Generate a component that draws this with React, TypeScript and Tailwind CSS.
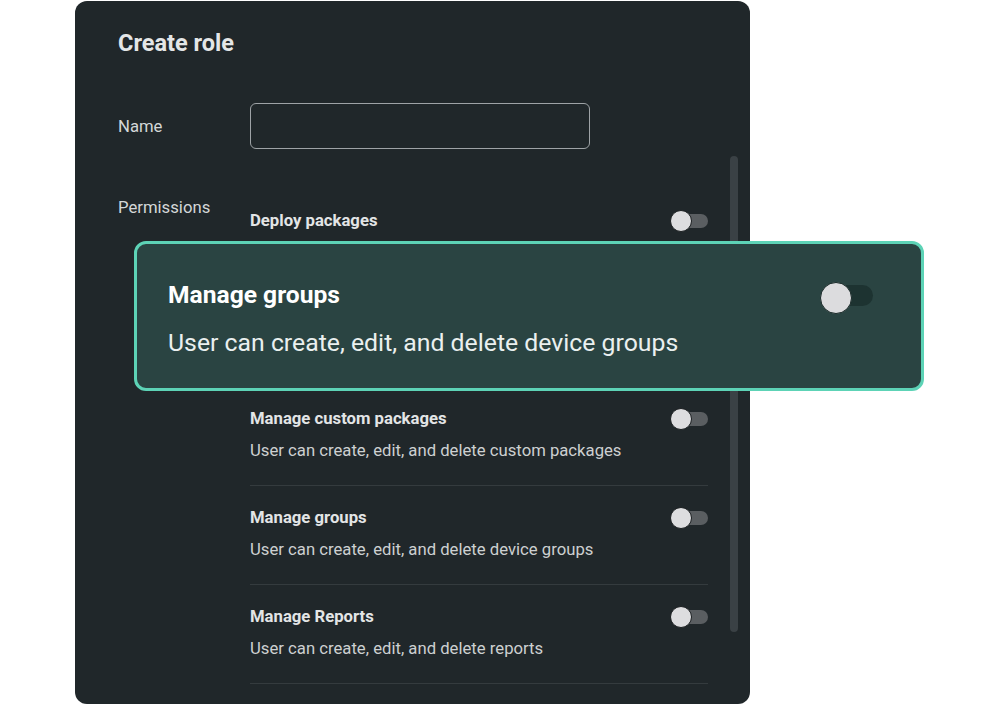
import React from "react";

const permissions = [
  { title: "Deploy packages", desc: "User can deploy packages to devices" },
  { title: "Manage devices", desc: "User can create, edit, and delete devices" },
  { title: "Manage custom packages", desc: "User can create, edit, and delete custom packages" },
  { title: "Manage groups", desc: "User can create, edit, and delete device groups" },
  { title: "Manage Reports", desc: "User can create, edit, and delete reports" },
];

function Toggle({ large }: { large?: boolean }) {
  if (large) {
    return (
      <div className="relative flex h-[30px] w-[53px] shrink-0 items-center">
        <div className="ml-auto h-[21px] w-[44px] rounded-full bg-[#1d3331]" />
        <div className="absolute left-0 top-[2px] h-[32px] w-[32px] rounded-full border border-[#1a2a29] bg-[#dcdcde]" />
      </div>
    );
  }
  return (
    <div className="relative flex h-[20px] w-[38px] shrink-0 items-center">
      <div className="ml-auto h-[14px] w-[30px] rounded-full bg-[#5a5e61]" />
      <div className="absolute -top-px left-0 h-[22px] w-[22px] rounded-full border border-[#1b1f21] bg-[#dddddf]" />
    </div>
  );
}

export default function App() {
  return (
    <div
      className="relative h-[705px] w-[1000px] overflow-hidden bg-white"
      style={{ fontFamily: "Roboto, 'Liberation Sans', sans-serif" }}
    >
      <div className="ml-[75px] mt-px h-[703px] w-[675px] rounded-xl bg-[#20272a] pl-[43px] pt-[28px]">
        <h1 className="text-[23.5px] font-bold leading-[28px] text-[#e4e6e7]">Create role</h1>

        <div className="mt-[46px] flex items-center">
          <div className="w-[132px] pt-px text-[16.7px] leading-[20px] text-[#d4d7d8]">Name</div>
          <div className="h-[46px] w-[340px] rounded-md border border-[#9ea3a6]" />
        </div>

        <div className="mt-[7px] flex">
          <div className="w-[132px] pt-[42px] text-[16.7px] leading-[20px] text-[#d4d7d8]">Permissions</div>
          <div className="w-[458px] pt-[33px]">
            {permissions.map((p) => (
              <div key={p.title} className="border-b border-[#343b3e] pb-[22px] pt-[22px]">
                <div className="flex h-[20px] items-center justify-between">
                  <span className="text-[16.7px] font-bold leading-[20px] text-[#e3e5e6]">{p.title}</span>
                  <Toggle />
                </div>
                <div className="mt-[10px] text-[16.7px] leading-[24px] text-[#cdd0d1]">{p.desc}</div>
              </div>
            ))}
          </div>
          <div className="ml-[22px] h-[476px] w-[8px] rounded-full bg-[#3a4145]" />
        </div>
      </div>

      <div className="absolute left-[134px] top-[241px] h-[150px] w-[790px] rounded-xl border-[3px] border-[#5dd3b6] bg-[#2a4442] pl-[31px] pr-[48px] pt-[36px]">
        <div className="flex items-center justify-between">
          <span className="text-[24.6px] font-bold leading-[30px] text-white">Manage groups</span>
          <Toggle large />
        </div>
        <div className="mt-[15px] text-[24.8px] leading-[36px] text-[#eaf0ef]">
          User can create, edit, and delete device groups
        </div>
      </div>
    </div>
  );
}
